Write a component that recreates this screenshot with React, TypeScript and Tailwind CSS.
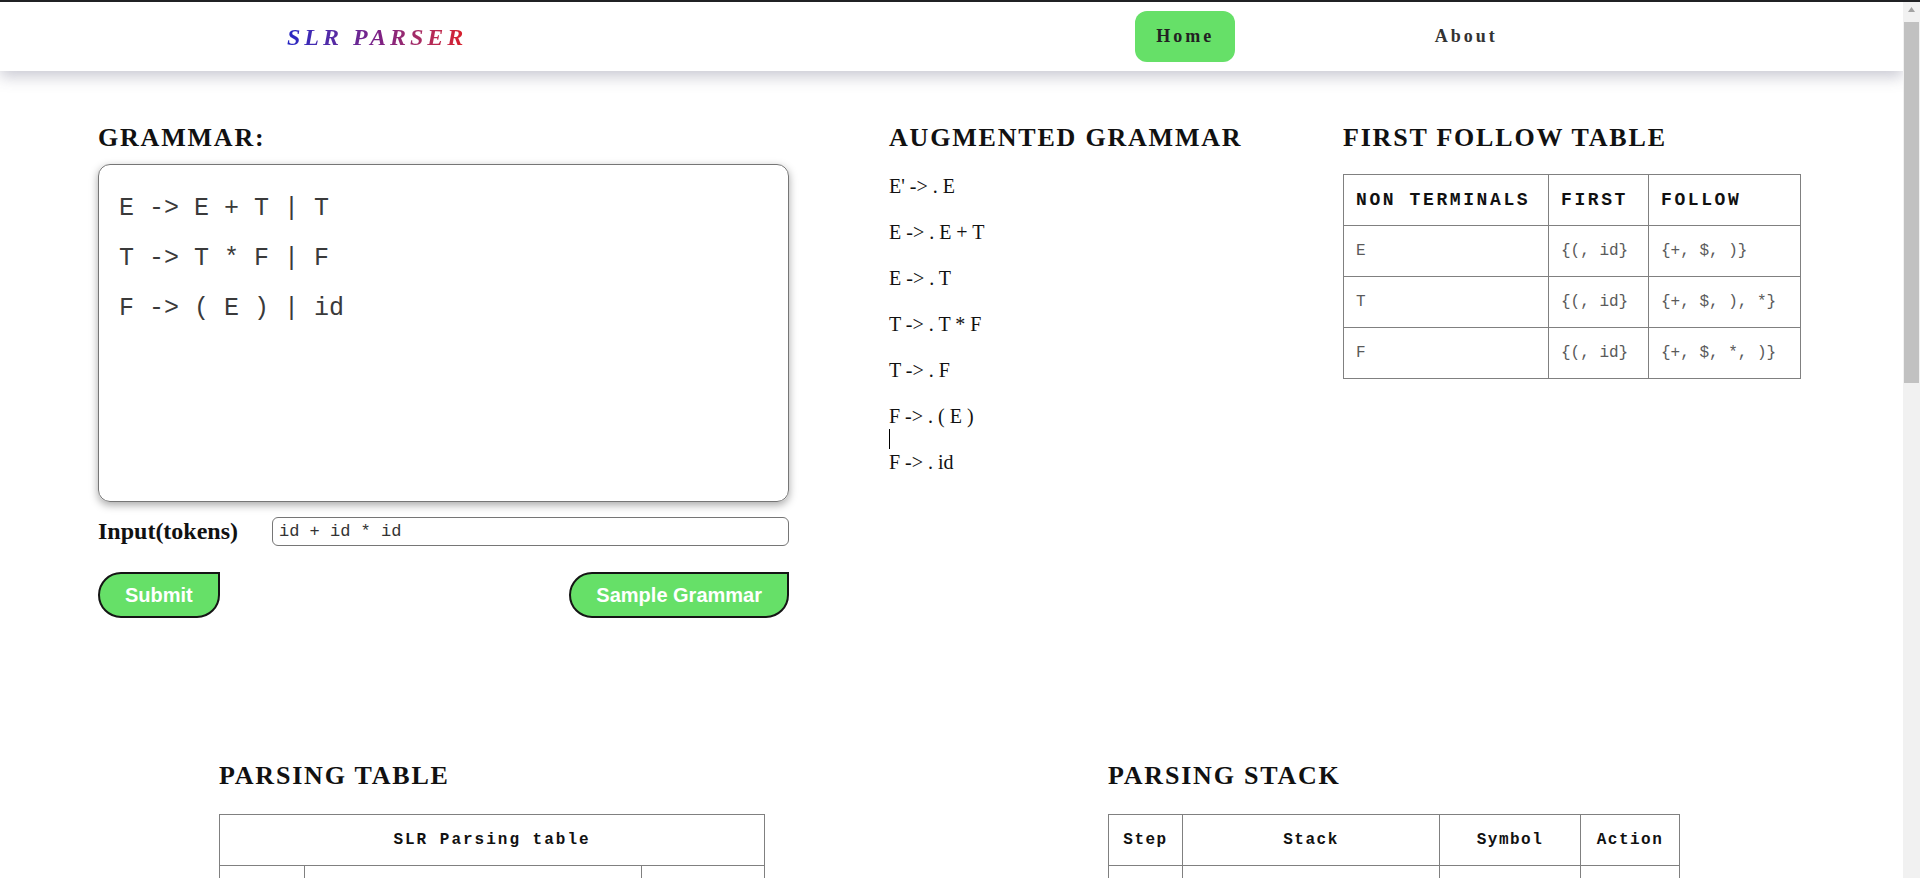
import React from 'react'

const serif = { fontFamily: '"Liberation Serif", "Times New Roman", serif' }

const augmented = ["E' -> . E", 'E -> . E + T', 'E -> . T', 'T -> . T * F', 'T -> . F', 'F -> . ( E )', 'F -> . id']

const firstFollow = [
  ['E', '{(, id}', '{+, $, )}'],
  ['T', '{(, id}', '{+, $, ), *}'],
  ['F', '{(, id}', '{+, $, *, )}'],
]

const terminals = ['id', '+', '*', '(', ')', '$']
const nonTerminals = ['E', 'T', 'F']

// rows: state -> [id, +, *, (, ), $, E, T, F]
const slrRows = [
  ['s5', '', '', 's4', '', '', '1', '2', '3'],
  ['', 's6', '', '', '', 'acc', '', '', ''],
  ['', 'r2', 's7', '', 'r2', 'r2', '', '', ''],
  ['', 'r4', 'r4', '', 'r4', 'r4', '', '', ''],
  ['s5', '', '', 's4', '', '', '8', '2', '3'],
  ['', 'r6', 'r6', '', 'r6', 'r6', '', '', ''],
  ['s5', '', '', 's4', '', '', '', '9', '3'],
  ['s5', '', '', 's4', '', '', '', '', '10'],
  ['', 's6', '', '', 's11', '', '', '', ''],
  ['', 'r1', 's7', '', 'r1', 'r1', '', '', ''],
  ['', 'r3', 'r3', '', 'r3', 'r3', '', '', ''],
  ['', 'r5', 'r5', '', 'r5', 'r5', '', '', ''],
]

const stackRows = [
  ['1', '0', 'id', 'Shift 5'],
  ['2', '0 id 5', '+', 'r6'],
  ['3', '0 F 3', '+', 'r4'],
  ['4', '0 T 2', '+', 'r2'],
  ['5', '0 E 1', '+', 'Shift 6'],
  ['6', '0 E 1 + 6', 'id', 'Shift 5'],
  ['7', '0 E 1 + 6 id 5', '*', 'r6'],
  ['8', '0 E 1 + 6 F 3', '*', 'r4'],
  ['9', '0 E 1 + 6 T 9', '*', 'Shift 7'],
  ['10', '0 E 1 + 6 T 9 * 7', 'id', 'Shift 5'],
  ['11', '0 E 1 + 6 T 9 * 7 id 5', '$', 'r6'],
  ['12', '0 E 1 + 6 T 9 * 7 F 10', '$', 'r3'],
  ['13', '0 E 1 + 6 T 9', '$', 'r1'],
  ['14', '0 E 1', '$', 'Accept'],
]

function Heading({ children }: { children: React.ReactNode }) {
  return (
    <h2 className="text-[26px] leading-[30px] font-bold tracking-[1.8px] text-[#111]" style={serif}>
      {children}
    </h2>
  )
}

// fake classic browser scrollbar (page is taller than the window)
function Scrollbar() {
  return (
    <div className="flex w-[17px] shrink-0 flex-col items-center bg-[#f1f1f1]">
      <svg className="mt-[5px]" width="7" height="5" viewBox="0 0 7 5">
        <path d="M3.5 0 L7 5 L0 5 Z" fill="#a3a3a3" />
      </svg>
      <div className="mt-[10px] h-[361px] w-[15px] bg-[#c1c1c1]" />
    </div>
  )
}

const cell = 'border border-[#808080]'
const mono = 'font-["Liberation_Mono",monospace]'

export default function App() {
  return (
    <div className="flex h-screen flex-col overflow-hidden bg-white text-[#111]" style={serif}>
      <div className="h-[2px] shrink-0 bg-[#202124]" />

      <div className="flex min-h-0 flex-1">
        <div className="min-w-0 flex-1 overflow-hidden">
          {/* Navbar */}
          <nav className="relative z-10 flex h-[69px] items-center bg-white shadow-[0_6px_14px_rgba(70,70,100,0.28)]">
            <span className="ml-[287px] bg-gradient-to-r from-[#2424c4] via-[#7b1f86] to-[#dc1a1f] bg-clip-text text-[24px] font-bold italic tracking-[4px] text-transparent">
              SLR PARSER
            </span>
            <a className="ml-[668px] flex h-[51px] w-[100px] items-center justify-center rounded-[12px] bg-[#66e068] text-[18px] font-bold tracking-[3px] text-[#222]">
              Home
            </a>
            <a className="ml-[181px] flex h-[51px] w-[100px] items-center justify-center text-[18px] font-bold tracking-[3px] text-[#333]">
              About
            </a>
          </nav>

          {/* Top section */}
          <div className="flex pt-[52px]">
            <div className="ml-[98px] w-[691px] shrink-0">
              <Heading>GRAMMAR:</Heading>
              <textarea
                className={`mt-[11px] block h-[338px] w-full resize-none rounded-[12px] border border-[#767676] px-[20px] pt-[19px] text-[25px] leading-[50px] text-[#3a3a3a] shadow-[0_3px_8px_rgba(0,0,0,0.35)] outline-none ${mono}`}
                defaultValue={'E -> E + T | T\nT -> T * F | F\nF -> ( E ) | id'}
              />
              <div className="mt-[15px] flex items-center">
                <label className="mt-[-2px] w-[174px] text-[24px] leading-[28px] font-bold">Input(tokens)</label>
                <input
                  className={`h-[29px] flex-1 rounded-[6px] border border-[#767676] px-[6px] text-[17px] text-[#333] outline-none ${mono}`}
                  defaultValue="id + id * id"
                />
              </div>
              <div className="mt-[26px] flex justify-between font-['Liberation_Sans',Arial,sans-serif]">
                <button className="h-[46px] rounded-tl-[24px] rounded-tr-none rounded-bl-[24px] rounded-br-[24px] border-2 border-[#151515] bg-[#66e068] px-[25px] text-[20px] font-bold text-white">
                  Submit
                </button>
                <button className="h-[46px] rounded-tl-[24px] rounded-tr-none rounded-bl-[24px] rounded-br-[24px] border-2 border-[#151515] bg-[#66e068] px-[25px] text-[20px] font-bold text-white">
                  Sample Grammar
                </button>
              </div>
            </div>

            <div className="ml-[100px] w-[454px] shrink-0">
              <Heading>AUGMENTED GRAMMAR</Heading>
              <div className="mt-[22px] flex flex-col gap-[23px] text-[20px] leading-[23px]">
                {augmented.map((line, i) => (
                  <div key={i} className="relative">
                    {line}
                    {i === 5 && <span className="absolute left-0 top-[24px] h-[20px] w-px bg-black" />}
                  </div>
                ))}
              </div>
            </div>

            <div className="w-[457px] shrink-0">
              <Heading>FIRST FOLLOW TABLE</Heading>
              <table className={`mt-[21px] w-[457px] table-fixed border-collapse ${mono}`}>
                <colgroup>
                  <col className="w-[205px]" />
                  <col className="w-[100px]" />
                  <col className="w-[152px]" />
                </colgroup>
                <thead>
                  <tr className="h-[51px] text-left text-[18px] font-bold tracking-[2.6px] text-[#111]">
                    <th className={`${cell} px-[12px]`}>NON TERMINALS</th>
                    <th className={`${cell} px-[12px]`}>FIRST</th>
                    <th className={`${cell} px-[12px]`}>FOLLOW</th>
                  </tr>
                </thead>
                <tbody>
                  {firstFollow.map((r) => (
                    <tr key={r[0]} className="h-[51px] text-[16px] text-[#5a5a5a]">
                      <td className={`${cell} px-[12px]`}>{r[0]}</td>
                      <td className={`${cell} px-[12px] whitespace-nowrap`}>{r[1]}</td>
                      <td className={`${cell} px-[12px] whitespace-nowrap`}>{r[2]}</td>
                    </tr>
                  ))}
                </tbody>
              </table>
            </div>
          </div>

          {/* Bottom section */}
          <div className="mt-[143px] flex pb-[440px]">
            <div className="ml-[219px] w-[546px] shrink-0">
              <Heading>PARSING TABLE</Heading>
              <table className={`mt-[23px] w-[546px] table-fixed border-collapse text-center ${mono}`}>
                <colgroup>
                  <col className="w-[85px]" />
                  {terminals.map((t) => (
                    <col key={t} className="w-[56px]" />
                  ))}
                  {nonTerminals.map((t) => (
                    <col key={t} className="w-[41px]" />
                  ))}
                </colgroup>
                <thead className="text-[16px] font-bold tracking-[2px] text-[#111]">
                  <tr className="h-[51px]">
                    <th colSpan={10} className={cell}>SLR Parsing table</th>
                  </tr>
                  <tr className="h-[51px]">
                    <th rowSpan={2} className={cell}>State</th>
                    <th colSpan={6} className={cell}>ACTION</th>
                    <th colSpan={3} className={cell}>GOTO</th>
                  </tr>
                  <tr className="h-[51px]">
                    {terminals.concat(nonTerminals).map((t) => (
                      <th key={t} className={cell}>{t}</th>
                    ))}
                  </tr>
                </thead>
                <tbody className="text-[15px] text-[#555]">
                  {slrRows.map((r, i) => (
                    <tr key={i} className="h-[51px]">
                      <td className={cell}>{i}</td>
                      {r.map((v, j) => (
                        <td key={j} className={cell}>{v}</td>
                      ))}
                    </tr>
                  ))}
                </tbody>
              </table>
            </div>

            <div className="ml-[343px] w-[571px] shrink-0">
              <Heading>PARSING STACK</Heading>
              <table className={`mt-[23px] w-[571px] table-fixed border-collapse text-center ${mono}`}>
                <colgroup>
                  <col className="w-[74px]" />
                  <col className="w-[257px]" />
                  <col className="w-[141px]" />
                  <col className="w-[99px]" />
                </colgroup>
                <thead>
                  <tr className="h-[51px] text-[16px] font-bold tracking-[1.5px] text-[#111]">
                    <th className={cell}>Step</th>
                    <th className={cell}>Stack</th>
                    <th className={cell}>Symbol</th>
                    <th className={cell}>Action</th>
                  </tr>
                </thead>
                <tbody className="text-[15px] text-[#555]">
                  {stackRows.map((r) => (
                    <tr key={r[0]} className="h-[51px]">
                      {r.map((v, j) => (
                        <td key={j} className={cell}>{v}</td>
                      ))}
                    </tr>
                  ))}
                </tbody>
              </table>
            </div>
          </div>
        </div>

        <Scrollbar />
      </div>
    </div>
  )
}
